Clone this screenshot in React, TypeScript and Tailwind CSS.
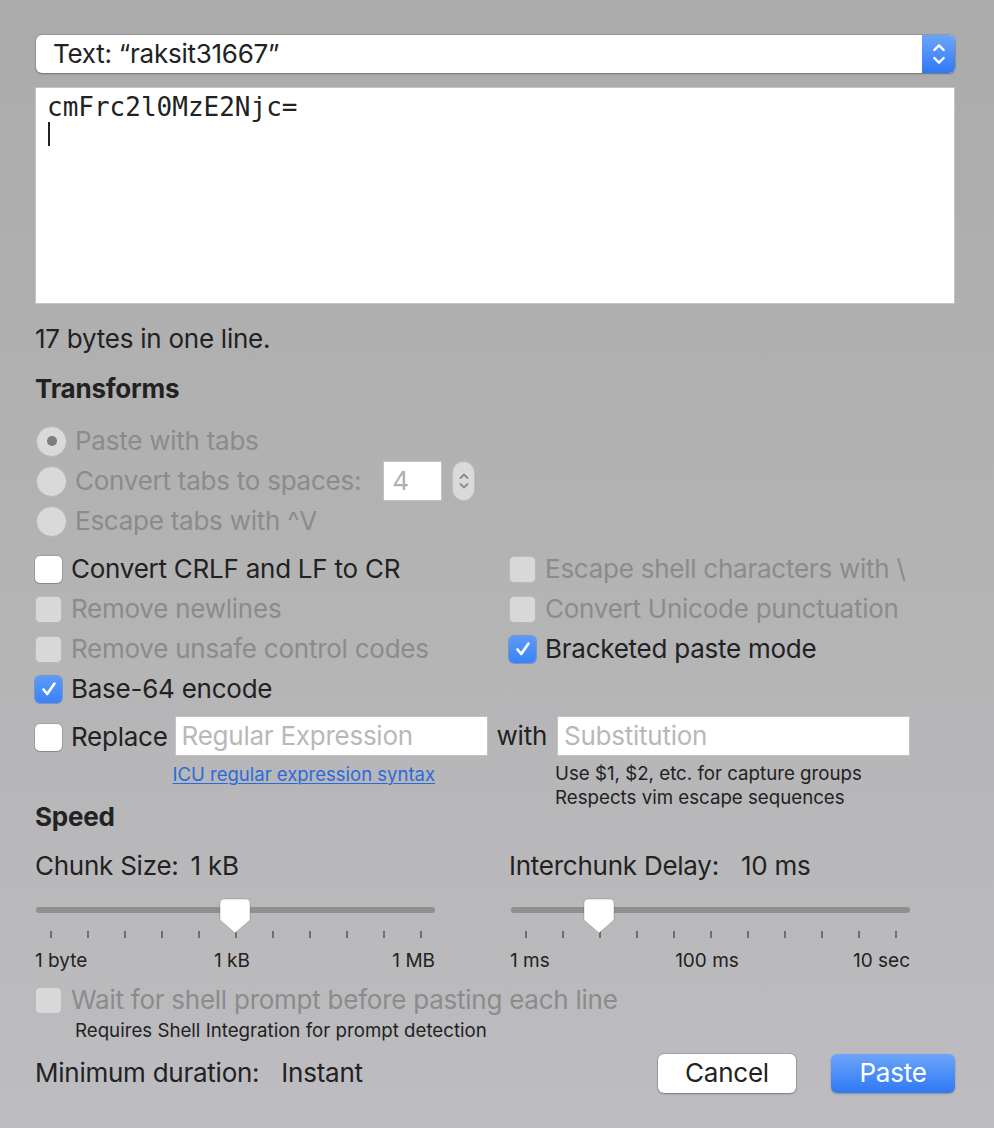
import React from 'react';

const ui = 'font-["Inter","Liberation_Sans",sans-serif]';

function Chevrons({ color = 'white', className = '' }: { color?: string; className?: string }) {
  return (
    <svg viewBox="0 0 12 22" className={className} fill="none" stroke={color} strokeWidth="1.8" strokeLinecap="round" strokeLinejoin="round">
      <path d="M2.5 8 L6 4.5 L9.5 8" />
      <path d="M2.5 14 L6 17.5 L9.5 14" />
    </svg>
  );
}

function Checkbox({ checked, disabled }: { checked?: boolean; disabled?: boolean }) {
  if (checked) {
    return (
      <span className="flex h-[27px] w-[27px] shrink-0 items-center justify-center rounded-[5px] bg-gradient-to-b from-[#5b9bf8] to-[#3a82f6] shadow-[0_0_0_1px_rgba(40,100,220,0.4)]">
        <svg viewBox="0 0 20 20" className="h-[20px] w-[20px]" fill="none" stroke="white" strokeWidth="2.6" strokeLinecap="round" strokeLinejoin="round">
          <path d="M4.5 10.5 L8.2 15 L15.5 4.5" />
        </svg>
      </span>
    );
  }
  return (
    <span
      className={
        disabled
          ? 'h-[27px] w-[27px] shrink-0 rounded-[5px] border border-[#b9b9b9] bg-[#d8d8d8]'
          : 'h-[27px] w-[27px] shrink-0 rounded-[5px] bg-white shadow-[0_0_0_1px_rgba(0,0,0,0.12),0_1px_1px_rgba(0,0,0,0.15)]'
      }
    />
  );
}

function CheckRow({ label, checked, disabled }: { label: string; checked?: boolean; disabled?: boolean }) {
  return (
    <div className="flex h-[40px] items-center gap-[9px]">
      <Checkbox checked={checked} disabled={disabled} />
      <span className={disabled ? 'text-[#8b8b8b]' : 'text-[#222]'}>{label}</span>
    </div>
  );
}

function Radio({ label, selected, children }: { label: string; selected?: boolean; children?: React.ReactNode }) {
  return (
    <div className="flex h-[40px] items-center">
      <span className="ml-[1px] flex h-[31px] w-[31px] shrink-0 items-center justify-center rounded-full border border-[#b9b9b9] bg-[#d9d9d9]">
        {selected && <span className="h-[10px] w-[10px] rounded-full bg-[#7d7d7d]" />}
      </span>
      <span className="ml-[8px] text-[#8b8b8b]">{label}</span>
      {children}
    </div>
  );
}

function Thumb() {
  return (
    <svg viewBox="0 0 32 36" className="h-[36px] w-[32px]">
      <path d="M5 1 H27 Q31 1 31 5 V22 L16 35 L1 22 V5 Q1 1 5 1 Z" fill="white" stroke="rgba(0,0,0,0.18)" strokeWidth="1" />
    </svg>
  );
}

function Slider({ at, labels }: { at: number; labels: [string, string, string] }) {
  const ticks = Array.from({ length: 11 }, (_, i) => i);
  return (
    <div className="w-[400px]">
      <div className="relative h-[50px]">
        <div className="absolute left-[1px] right-0 top-[19px] h-[6px] rounded-full bg-[#8f8f8f]" />
        {ticks.map((i) => (
          <span key={i} className="absolute top-[43px] h-[7px] w-[1.5px] bg-[#6e6e6e]" style={{ left: 15 + i * 37 }} />
        ))}
        <div className="absolute top-[10px]" style={{ left: 15 + at * 37 - 16 }}>
          <Thumb />
        </div>
      </div>
      <div className="relative mt-[12px] h-[22px] text-[19px] leading-[22px] tracking-normal text-[#222]">
        <span className="absolute left-0 top-0">{labels[0]}</span>
        <span className="absolute left-[197px] top-0 -translate-x-1/2">{labels[1]}</span>
        <span className="absolute right-0 top-0">{labels[2]}</span>
      </div>
    </div>
  );
}

export default function App() {
  return (
    <div className={`${ui} h-[1128px] w-[994px] bg-gradient-to-b from-[#ababab] via-[#b3b3b4] to-[#bdbdc1] pl-[35px] pr-[39px] pt-[35px] text-[26px] leading-none tracking-[-0.25px] text-[#222]`}>
      {/* pop-up button */}
      <div className="ml-[1px] flex h-[38px] items-stretch overflow-hidden rounded-[6px] bg-white shadow-[0_0_0_1px_rgba(0,0,0,0.1),0_1px_2px_rgba(0,0,0,0.25)]">
        <div className="flex flex-1 items-center pl-[17px] text-[#222]">Text: “raksit31667”</div>
        <div className="flex w-[33px] items-center justify-center bg-gradient-to-b from-[#6ba5f9] to-[#2f78f5]">
          <Chevrons className="h-[30px] w-[16px]" />
        </div>
      </div>

      {/* text view */}
      <div className="mt-[14px] h-[217px] border border-[#c4c4c4] bg-white pl-[11px] pt-[6px] font-['DejaVu_Sans_Mono',monospace] text-[26px] tracking-normal">
        <div className="leading-[26px]">cmFrc2l0MzE2Njc=</div>
        <div className="ml-[1px] mt-[2px] h-[24px] w-[2px] bg-[#222]" />
      </div>

      <div className="mt-[19px] flex h-[32px] items-center">17 bytes in one line.</div>

      <div className="mt-[18px] flex h-[32px] items-center font-bold">Transforms</div>

      <div className="mt-[16px]">
        <Radio label="Paste with tabs" selected />
        <Radio label="Convert tabs to spaces:">
          <div className="ml-[22px] flex h-[40px] w-[59px] items-center border border-[#c2c2c2] bg-white pl-[8px] text-[#b0b0b0]">4</div>
          <div className="ml-[10px] flex h-[40px] w-[23px] items-center justify-center rounded-full border border-[#bdbdbd] bg-[#dadada]">
            <Chevrons color="#8a8a8a" className="h-[24px] w-[12px]" />
          </div>
        </Radio>
        <Radio label="Escape tabs with ^V" />
      </div>

      <div className="mt-[8px] grid grid-cols-[474px_1fr]">
        <CheckRow label="Convert CRLF and LF to CR" />
        <CheckRow label="Escape shell characters with \" disabled />
        <CheckRow label="Remove newlines" disabled />
        <CheckRow label="Convert Unicode punctuation" disabled />
        <CheckRow label="Remove unsafe control codes" disabled />
        <CheckRow label="Bracketed paste mode" checked />
        <CheckRow label="Base-64 encode" checked />
        <div />
      </div>

      {/* replace row */}
      <div className="mt-[7px] flex items-start">
        <div className="flex h-[40px] items-center gap-[9px] pt-[2px]">
          <Checkbox />
          <span>Replace</span>
        </div>
        <div className="ml-[7px] flex flex-col">
          <div className="flex h-[40px] w-[313px] items-center border border-[#c2c2c2] bg-white pl-[6px] text-[#b8b8b8]">Regular Expression</div>
          <span className="ml-[-2px] mt-[9px] text-[18.5px] tracking-normal text-[#2a6bd9] underline decoration-1 underline-offset-2">ICU regular expression syntax</span>
        </div>
        <span className="ml-[9px] flex h-[40px] items-center">with</span>
        <div className="ml-[10px] flex flex-col">
          <div className="flex h-[40px] w-[353px] items-center border border-[#c2c2c2] bg-white pl-[6px] text-[#b8b8b8]">Substitution</div>
          <div className="ml-[-2px] mt-[8px] space-y-[5px] text-[18.7px] leading-[19px] tracking-normal">
            <div>Use $1, $2, etc. for capture groups</div>
            <div>Respects vim escape sequences</div>
          </div>
        </div>
      </div>

      <div className="mt-[-6px] flex h-[32px] items-center font-bold">Speed</div>

      <div className="mt-[17px] grid grid-cols-[474px_1fr]">
        <div>
          <div className="flex h-[32px] items-center">
            <span>Chunk Size:</span>
            <span className="ml-[12px]">1 kB</span>
          </div>
          <div className="mt-[6px]">
            <Slider at={5} labels={['1 byte', '1 kB', '1 MB']} />
          </div>
        </div>
        <div>
          <div className="flex h-[32px] items-center">
            <span>Interchunk Delay:</span>
            <span className="ml-[22px]">10 ms</span>
          </div>
          <div className="ml-[1px] mt-[6px]">
            <Slider at={2} labels={['1 ms', '100 ms', '10 sec']} />
          </div>
        </div>
      </div>

      <div className="mt-[8px]">
        <CheckRow label="Wait for shell prompt before pasting each line" disabled />
      </div>
      <div className="ml-[40px] mt-[2px] text-[18.7px] tracking-normal">Requires Shell Integration for prompt detection</div>

      <div className="mt-[13px] flex items-center">
        <span>Minimum duration:</span>
        <span className="ml-[22px]">Instant</span>
        <div className="ml-auto flex gap-[35px]">
          <button className="h-[39px] w-[138px] rounded-[6px] bg-white text-[26px] text-[#222] shadow-[0_0_0_1px_rgba(0,0,0,0.12),0_1px_2px_rgba(0,0,0,0.25)]">Cancel</button>
          <button className="h-[39px] w-[124px] rounded-[6px] bg-gradient-to-b from-[#6ba5f9] to-[#2f78f5] text-[26px] text-white shadow-[0_1px_2px_rgba(0,0,0,0.25)]">Paste</button>
        </div>
      </div>
    </div>
  );
}
